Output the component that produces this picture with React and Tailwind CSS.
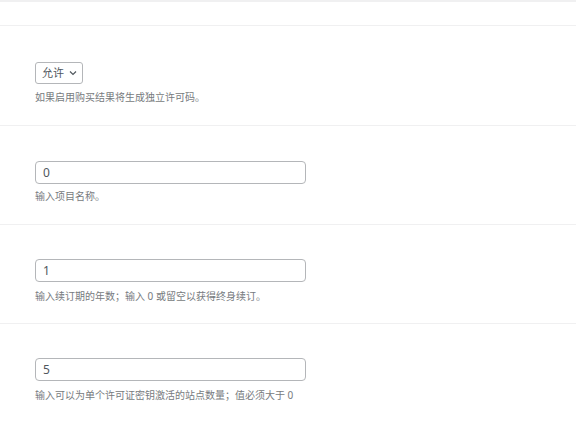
import React from 'react';

const font = { fontFamily: '"Noto Sans", "Noto Sans CJK SC", sans-serif' };

function Field({ value, help, pt, mt }) {
  return (
    <div className={`h-[99px] border-b border-[#f0f0f1] pl-[35px] ${pt}`}>
      <div className="flex h-[23px] w-[271px] items-center rounded-[4px] border border-[#b4b6b9] bg-white pl-[7px] text-[12px] text-[#50575e]">
        {value}
      </div>
      <p className={`${mt} text-[10px] leading-[14px] text-[#777b80]`}>{help}</p>
    </div>
  );
}

export default function App() {
  return (
    <div className="min-h-[432px] w-full bg-white" style={font}>
      {/* top strip */}
      <div className="h-[26px] border-t-2 border-b border-[#f0f0f1]" />

      {/* license toggle */}
      <div className="h-[100px] border-b border-[#f0f0f1] pl-[35px] pt-[36px]">
        <div className="flex h-[22px] w-[48px] items-center gap-[5px] rounded-[3px] border border-[#b4b6b9] pl-[6px] text-[11px] text-[#50575e]">
          <span>允许</span>
          <svg width="8" height="6" viewBox="0 0 8 6" fill="none">
            <path d="M1 1.5 4 4.5 7 1.5" stroke="#50575e" strokeWidth="1.2" />
          </svg>
        </div>
        <p className="mt-[6px] text-[10px] leading-[14px] text-[#777b80]">如果启用购买结果将生成独立许可码。</p>
      </div>

      <Field value="0" help="输入项目名称。" pt="pt-[35px]" mt="mt-[5px]" />
      <Field value="1" help="输入续订期的年数；输入 0 或留空以获得终身续订。" pt="pt-[34px]" mt="mt-[7px]" />

      <div className="pl-[35px] pt-[34px]">
        <div className="flex h-[23px] w-[271px] items-center rounded-[4px] border border-[#b4b6b9] bg-white pl-[7px] text-[12px] text-[#50575e]">
          5
        </div>
        <p className="mt-[7px] text-[10px] leading-[14px] text-[#777b80]">输入可以为单个许可证密钥激活的站点数量；值必须大于 0</p>
      </div>
    </div>
  );
}
